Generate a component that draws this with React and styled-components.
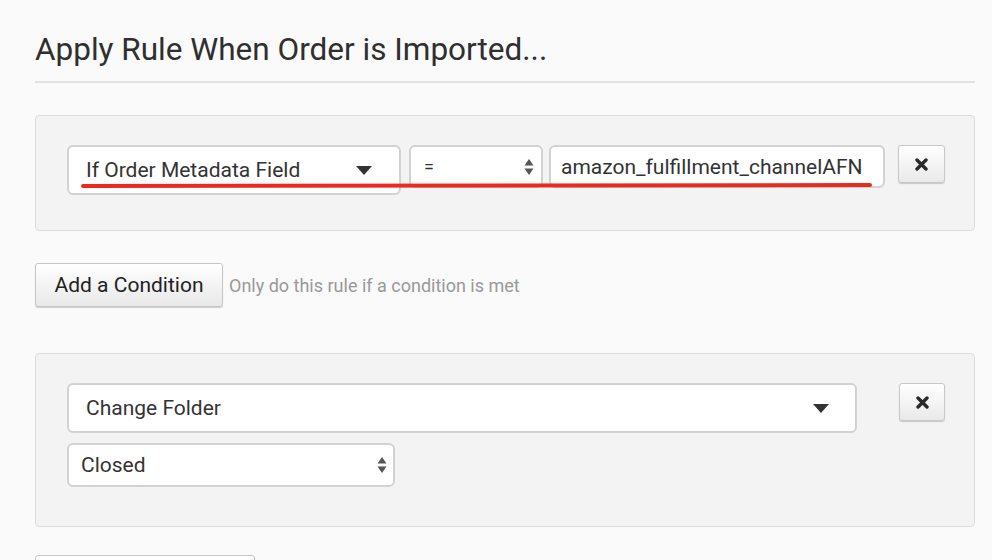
import React from "react";
import styled, { createGlobalStyle } from "styled-components";

const GlobalStyle = createGlobalStyle`
  html, body {
    margin: 0;
    padding: 0;
    background: #fafafa;
    font-family: Roboto, "Liberation Sans", sans-serif;
    color: #333;
  }
`;

const Page = styled.main`
  padding: 0 17px 0 35px;
  overflow: hidden;
  height: 560px;
`;

const Title = styled.h1`
  margin: 0;
  padding-top: 31px;
  font-size: 31.5px;
  font-weight: 400;
  line-height: 38px;
  color: #2f2f2f;
`;

const Rule = styled.hr`
  margin: 12px 0 32px;
  border: 0;
  border-top: 2px solid #e2e2e2;
`;

const Panel = styled.section`
  position: relative;
  box-sizing: border-box;
  border: 1px solid #dcdcdc;
  border-radius: 4px;
  background: #f3f3f3;
  padding: ${(p) => p.$pad};
  display: flex;
  gap: ${(p) => p.$gap || "0"};
  align-items: flex-start;
`;

const Row = styled.div`
  display: flex;
  align-items: flex-start;
`;

const Stack = styled.div`
  display: flex;
  flex-direction: column;
  gap: 10px;
`;

const Field = styled.div`
  box-sizing: border-box;
  display: flex;
  align-items: center;
  justify-content: space-between;
  width: ${(p) => p.$w}px;
  height: ${(p) => p.$h}px;
  margin-right: ${(p) => p.$mr || 0}px;
  padding: 0 ${(p) => p.$pr || 18}px 0 ${(p) => p.$pl || 18}px;
  background: #fff;
  border: 2px solid #d2d2d2;
  border-radius: 6px;
  font-size: ${(p) => p.$fs || 21}px;
  color: #333;
  white-space: nowrap;
`;

const IconButton = styled.button`
  box-sizing: border-box;
  width: 47px;
  height: 38px;
  display: flex;
  align-items: center;
  justify-content: center;
  border: 1px solid #c8c8c8;
  border-radius: 3px;
  background: linear-gradient(#ffffff, #e9e9e9);
  box-shadow: 0 1px 1px rgba(0, 0, 0, 0.18);
  padding: 0;
`;

const ActionRow = styled.div`
  display: flex;
  align-items: center;
  margin: ${(p) => p.$m || "32px 0 46px"};
  gap: 6px;
`;

const Button = styled.button`
  box-sizing: border-box;
  width: ${(p) => p.$w}px;
  height: 44px;
  border: 1px solid #c6c6c6;
  border-radius: 3px;
  background: linear-gradient(#ffffff, #e8e8e8);
  box-shadow: 0 1px 1px rgba(0, 0, 0, 0.18);
  font-family: Roboto, "Liberation Sans", sans-serif;
  font-size: 21px;
  color: #222;
  padding: 0;
`;

const Hint = styled.span`
  font-size: 18px;
  color: #999;
`;

const Underline = styled.svg`
  position: absolute;
  left: 44px;
  top: 65px;
  pointer-events: none;
`;

const Caret = () => (
  <svg width="16" height="9" viewBox="0 0 16 9">
    <path d="M0 0h16L8 9z" fill="#333" />
  </svg>
);

const UpDown = () => (
  <svg width="10" height="18" viewBox="0 0 10 18">
    <path d="M5 1l4.5 6.5h-9z M5 17l4.5-6.5h-9z" fill="#555" />
  </svg>
);

const Times = () => (
  <svg width="13" height="13" viewBox="0 0 13 13">
    <path
      d="M2 2l9 9M11 2l-9 9"
      stroke="#2a2a2a"
      strokeWidth="3.4"
      strokeLinecap="round"
    />
  </svg>
);

export default function App() {
  return (
    <Page>
      <GlobalStyle />
      <Title>Apply Rule When Order is Imported...</Title>
      <Rule />

      <Panel $pad="29px 29px 35px 31px">
        <Row>
          <Field $w={334} $h={50} $mr={8} $pl={17} $pr={27}>
            If Order Metadata Field
            <Caret />
          </Field>
          <Field $w={134} $h={43} $mr={6} $pl={13} $pr={7} $fs={18}>
            =
            <UpDown />
          </Field>
          <Field $w={336} $h={43} $mr={13} $pl={10}>
            amazon_fulfillment_channelAFN
          </Field>
          <IconButton aria-label="remove">
            <Times />
          </IconButton>
        </Row>
        <Underline width="800" height="10" viewBox="0 0 800 10">
          <path
            d="M3 5 C 60 6, 400 5, 790 4"
            stroke="#ea2a1f"
            strokeWidth="4"
            strokeLinecap="round"
            fill="none"
          />
        </Underline>
      </Panel>

      <ActionRow>
        <Button $w={188}>Add a Condition</Button>
        <Hint>Only do this rule if a condition is met</Hint>
      </ActionRow>

      <Panel $pad="29px 29px 39px 31px" $gap="42px">
        <Stack>
          <Field $w={790} $h={50} $pl={17} $pr={26}>
            Change Folder
            <Caret />
          </Field>
          <Field $w={328} $h={44} $pl={12} $pr={6}>
            Closed
            <UpDown />
          </Field>
        </Stack>
        <IconButton aria-label="remove">
          <Times />
        </IconButton>
      </Panel>

      <ActionRow $m="28px 0 0">
        <Button $w={220} aria-label="save" />
      </ActionRow>
    </Page>
  );
}
